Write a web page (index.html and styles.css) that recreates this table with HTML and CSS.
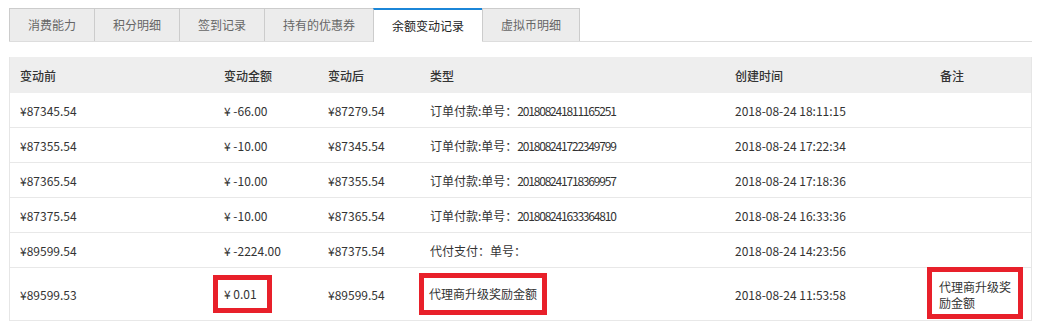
FILE: index.html
```html
<!DOCTYPE html>
<html lang="zh-CN">
<head>
<meta charset="utf-8">
<title>余额变动记录</title>
<link rel="stylesheet" href="styles.css">
</head>
<body>
<div class="page">
  <ul class="tabs">
    <li class="tab">消费能力</li>
    <li class="tab">积分明细</li>
    <li class="tab">签到记录</li>
    <li class="tab">持有的优惠券</li>
    <li class="tab active">余额变动记录</li>
    <li class="tab last">虚拟币明细</li>
  </ul>
  <table class="records">
    <colgroup>
      <col class="c1"><col class="c2"><col class="c3"><col class="c4"><col class="c5"><col class="c6">
    </colgroup>
    <thead>
      <tr><th>变动前</th><th>变动金额</th><th>变动后</th><th>类型</th><th>创建时间</th><th>备注</th></tr>
    </thead>
    <tbody>
      <tr><td>¥87345.54</td><td>¥ -66.00</td><td>¥87279.54</td><td>订单付款:单号：<span class="order-no">201808241811165251</span></td><td>2018-08-24 18:11:15</td><td></td></tr>
      <tr><td>¥87355.54</td><td>¥ -10.00</td><td>¥87345.54</td><td>订单付款:单号：<span class="order-no">201808241722349799</span></td><td>2018-08-24 17:22:34</td><td></td></tr>
      <tr><td>¥87365.54</td><td>¥ -10.00</td><td>¥87355.54</td><td>订单付款:单号：<span class="order-no">201808241718369957</span></td><td>2018-08-24 17:18:36</td><td></td></tr>
      <tr><td>¥87375.54</td><td>¥ -10.00</td><td>¥87365.54</td><td>订单付款:单号：<span class="order-no">201808241633364810</span></td><td>2018-08-24 16:33:36</td><td></td></tr>
      <tr><td>¥89599.54</td><td>¥ -2224.00</td><td>¥87375.54</td><td>代付支付：单号：</td><td>2018-08-24 14:23:56</td><td></td></tr>
      <tr class="tall">
        <td>¥89599.53</td>
        <td><span class="mark m-amount">¥ 0.01</span></td>
        <td>¥89599.54</td>
        <td><span class="mark m-type">代理商升级奖励金额</span></td>
        <td>2018-08-24 11:53:58</td>
        <td class="top"><span class="mark m-note">代理商升级奖励金额</span></td>
      </tr>
    </tbody>
  </table>
</div>
</body>
</html>
```

FILE: styles.css
```css
* { box-sizing: border-box; }
html, body { margin: 0; padding: 0; background: #fff; }
body {
  font-family: "Noto Sans CJK SC", "Noto Sans", "Liberation Sans", sans-serif;
  font-size: 12px;
  color: #333;
}
.page {
  padding: 8px 8px 0 9px;
}
.tabs {
  list-style: none;
  margin: 0;
  padding: 0;
  display: flex;
  border-bottom: 1px solid #dddddd;
  height: 34px;
}
.tab {
  height: 33px;
  line-height: 32px;
  padding: 0 18px;
  background: #ececec;
  border: 1px solid #cccccc;
  border-bottom: none;
  border-right: none;
  color: #666;
  white-space: nowrap;
}
.tab.last { border-right: 1px solid #cccccc; }
.tab.active {
  height: 34px;
  line-height: 31px;
  background: #fff;
  border-top: 2px solid #1b86d8;
  color: #222;
}

.records {
  margin-top: 15px;
  width: 1023px;
  table-layout: fixed;
  border-collapse: separate;
  border-spacing: 0;
  border-left: 1px solid #e6e6e6;
  border-right: 1px solid #e6e6e6;
}
.c1 { width: 204px; }
.c2 { width: 104px; }
.c3 { width: 102px; }
.c4 { width: 305px; }
.c5 { width: 205px; }
.c6 { width: 101px; }
.records th {
  background: #eeeeee;
  height: 36px;
  padding: 0 10px;
  text-align: left;
  font-weight: 500;
  color: #333;
}
.records td {
  height: 35px;
  padding: 0 10px;
  border-bottom: 1px solid #e8e8e8;
  color: #333;
  white-space: nowrap;
  vertical-align: middle;
}
.records tr.tall td { height: 53px; }
.records td.top { vertical-align: top; white-space: normal; }

.order-no { letter-spacing: -1.2px; }

.mark {
  display: inline-block;
  border: 5px solid #e8202a;
  vertical-align: middle;
}
.m-amount {
  width: 59px;
  height: 38px;
  line-height: 28px;
  margin-left: -11px;
  padding-left: 6px;
}
.m-type {
  width: 128px;
  height: 42px;
  line-height: 32px;
  margin-left: -11px;
  padding-left: 5px;
}
.m-note {
  display: block;
  width: 96px;
  height: 52px;
  margin: -1px 0 0 -13px;
  padding: 7px 5px 0 7px;
  line-height: 16px;
  white-space: normal;
}
```
